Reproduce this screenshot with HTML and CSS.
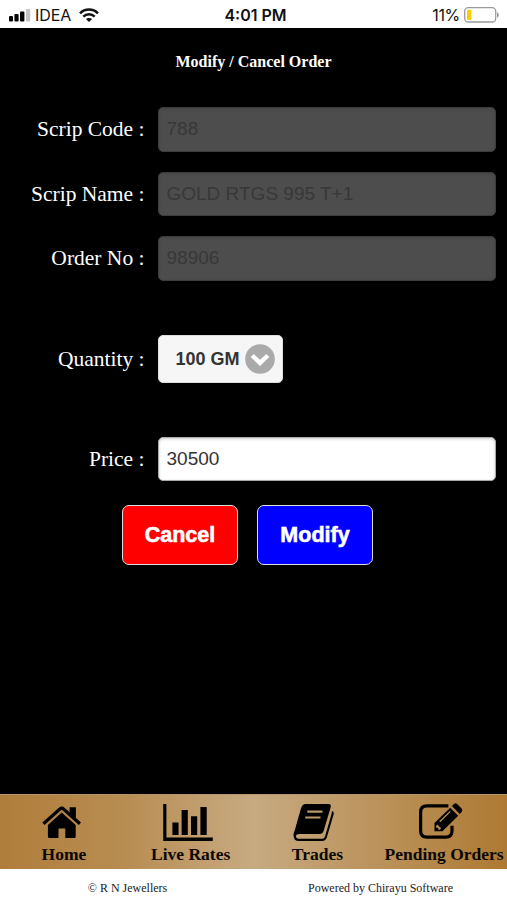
FILE: index.html
```html
<!DOCTYPE html>
<html lang="en">
<head>
<meta charset="utf-8">
<title>Modify / Cancel Order</title>
<link rel="stylesheet" href="styles.css">
</head>
<body>
<div class="screen">
  <header class="status">
    <div class="status-left">
      <svg class="signal" width="22" height="13" viewBox="0 0 22 13">
        <rect x="0" y="7" width="4" height="5.5" rx="1"/>
        <rect x="5.4" y="5" width="4.2" height="7.5" rx="1"/>
        <rect x="11" y="2.6" width="4.4" height="9.9" rx="1"/>
        <rect x="17" y="0" width="4.2" height="12.5" rx="1" fill="#c4c4c4"/>
      </svg>
      <span class="carrier">IDEA</span>
      <svg class="wifi" width="20" height="15" viewBox="0 0 20 15" fill="none" stroke="#111" stroke-width="2.5">
        <path d="M1 5.3C6 .3 14 .3 19 5.3"/>
        <path d="M4.3 8.6c3.3-3.1 8.1-3.1 11.4 0"/>
        <path d="M10 14 6.9 11.1c1.8-1.5 4.4-1.5 6.2 0z" fill="#111" stroke="none"/>
      </svg>
    </div>
    <div class="time">4:01 PM</div>
    <div class="status-right">
      <span class="percent">11%</span>
      <svg width="36" height="16" viewBox="0 0 36 16">
        <rect x=".7" y=".7" width="31" height="14.3" rx="3.5" fill="#fff" stroke="#9b9b9b" stroke-width="1.3"/>
        <rect x="3" y="2.8" width="4.4" height="10.2" rx="1" fill="#fc0"/>
        <path d="M33 5.2c2.4 1 2.4 4.4 0 5.4z" fill="#9b9b9b"/>
      </svg>
    </div>
  </header>

  <main class="content">
    <h1 class="title">Modify / Cancel Order</h1>
    <form class="form">
      <label class="label" for="code">Scrip Code :</label>
      <input class="field" id="code" value="788" disabled>
      <label class="label" for="name">Scrip Name :</label>
      <input class="field" id="name" value="GOLD RTGS 995 T+1" disabled>
      <label class="label" for="order">Order No :</label>
      <input class="field" id="order" value="98906" disabled>
      <span class="label">Quantity :</span>
      <div class="select">
        <span class="select-text">100 GM</span>
        <svg width="30" height="30" viewBox="0 0 30 30">
          <circle cx="15" cy="15" r="14.8" fill="#aaa"/>
          <path d="M7.2 11.5 15 18.9l7.8-7.4" fill="none" stroke="#fff" stroke-width="4.4"/>
        </svg>
      </div>
      <label class="label" for="price">Price :</label>
      <input class="field" id="price" value="30500">
    </form>
    <div class="actions">
      <button class="btn cancel" type="button">Cancel</button>
      <button class="btn modify" type="button">Modify</button>
    </div>
  </main>

  <nav class="nav">
    <a class="nav-item">
      <svg class="nav-icon" viewBox="36.9 800 54 42">
        <path d="M43.3 823.8 59.5 809.2Q61.6 807.3 63.7 809.2L79.8 823.8" fill="none" stroke="#000" stroke-width="3.2"/>
        <path d="M69.5 807.2h6.3v13l-6.3-5.8zM61.6 812.6 75.6 825v11.4q0 1.6-1.6 1.6h-8.8v-9.4h-6.8v9.4h-9q-1.6 0-1.6-1.6V825z"/>
      </svg>
      <span>Home</span>
    </a>
    <a class="nav-item">
      <svg class="nav-icon" viewBox="163.6 800 54 42">
        <path d="M162.8 804h3.2v33.6h46.4v3.4h-49.6zM172 822.5h6.2V835H172zM181.2 810h6.2v25h-6.2zM190.6 816.3h6.2V835h-6.2zM200 807h6.3v28H200z"/>
      </svg>
      <span>Live Rates</span>
    </a>
    <a class="nav-item">
      <svg class="nav-icon" viewBox="290.4 800 54 42">
        <path d="M305.5 804h23.3q3.2 0 2.3 3.2L324 831q-1 3-4 3h-20q-3.5 0-3.6 2.2 0 2.5 3.1 2.5h23q2.2 0 3-2.5l6.5-22.5q.4-1.6.3-2.8 2.5.9 1.7 3.7l-6.8 22.9q-1.2 3.5-4.8 3.5h-23.2q-5 0-5.3-5.5 0-2.5 1.3-5.2l5.7-20.3q1.5-6 4.6-6z"/>
        <path d="M307.7 811.6h15.2M305.6 817.5h15.3" stroke="#b99867" stroke-width="2.2"/>
      </svg>
      <span>Trades</span>
    </a>
    <a class="nav-item">
      <svg class="nav-icon" viewBox="417.1 800 54 42">
        <path d="M448.5 805.8H427q-6.3 0-6.3 6.3v18.7q0 6.3 6.3 6.3h18.8q6.3 0 6.3-6.3v-5" fill="none" stroke="#000" stroke-width="3.2"/>
        <path d="m434.6 823 15.7-15.3 8 8-15.8 15.5h-7.9z"/>
        <path d="m452 806 1.8-1.8q1.8-1.7 3.6 0l4.3 4.4q1.6 1.8 0 3.5l-1.8 1.8z"/>
        <path d="m439.8 821.8 10.6-10.4" stroke="#c19760" stroke-width="1.2"/>
        <path d="m437.2 824.6 4 4-1.3 1.2h-1.5v-2h-2.2v-1.7z" fill="#bd935b"/>
      </svg>
      <span>Pending Orders</span>
    </a>
  </nav>
  <footer class="footer">
    <span>© R N Jewellers</span>
    <span>Powered by Chirayu Software</span>
  </footer>
</div>
</body>
</html>
```
FILE: styles.css
```css
* { box-sizing: border-box; }
body { margin: 0; background: #fff; }
.screen {
  width: 507px;
  height: 900px;
  display: flex;
  flex-direction: column;
  overflow: hidden;
  font-family: "Liberation Serif", serif;
}
.status {
  height: 28px;
  padding: 2px 7px 0 9px;
  display: grid;
  grid-template-columns: 1fr auto 1fr;
  align-items: center;
  background: #fff;
  color: #111;
  font: 16px/24px Inter, "Liberation Sans", sans-serif;
}
.status-left { display: flex; align-items: center; }
.carrier { margin: 0 8px 0 4px; letter-spacing: -.1px; }
.time { padding-left: 2px; font-weight: 600; font-size: 16px; }
.status-right { display: flex; align-items: center; justify-content: flex-end; gap: 4px; }
.percent { font-size: 16px; letter-spacing: -.3px; }
.content { height: 766px; background: #000; color: #fff; }
.title {
  margin: 0;
  padding-top: 24px;
  height: 79px;
  text-align: center;
  font-size: 16px;
  line-height: 20px;
}
.form {
  display: grid;
  grid-template-columns: 144.5px 338px;
  column-gap: 13px;
  grid-template-rows: 44.5px 44.5px 44.5px 116px 44.5px;
  row-gap: 20px;
}
.label {
  align-self: center;
  text-align: right;
  font-size: 21.5px;
  line-height: 26px;
  white-space: nowrap;
}
.field {
  width: 100%;
  height: 44.5px;
  padding: 0 8px;
  border: 1px solid #aaa;
  border-radius: 5px;
  background: #fff;
  box-shadow: inset 0 1px 3px rgba(0, 0, 0, .2);
  color: #333;
  font: 19px "Liberation Sans", sans-serif;
}
.field:disabled {
  background: #4d4d4d;
  border-color: #3c3c3c;
  box-shadow: inset 0 1px 3px rgba(0, 0, 0, .12);
  color: #383838;
}
.select {
  align-self: center;
  width: 125px;
  height: 48px;
  padding: 0 7px 0 17px;
  display: flex;
  align-items: center;
  justify-content: space-between;
  border: 1px solid #ddd;
  border-radius: 5px;
  background: #f6f6f6;
  color: #333;
  font: bold 18px "Liberation Sans", sans-serif;
}
.select-text { padding-top: 2px; }
.actions {
  margin: 23.5px 134px 0 122px;
  display: flex;
  justify-content: space-between;
}
.btn {
  width: 116px;
  height: 60px;
  padding-top: 3px;
  border: 1.5px solid #ddd;
  border-radius: 7px;
  color: #fff;
  font: bold 21.5px "Liberation Sans", sans-serif;
  -webkit-text-stroke: .6px #fff;
}
.cancel { background: #f00; }
.modify { background: #00f; }
.nav {
  height: 75px;
  display: grid;
  grid-template-columns: repeat(4, 1fr);
  border-top: 1px solid #b59669;
  background: linear-gradient(90deg, #b07d3b 0, #b88d52 25%, #c7aa82 50%, #b88d52 80%, #ae7933 100%);
}
.nav-item {
  display: flex;
  flex-direction: column;
  align-items: center;
  padding: 5px 0 0 1px;
  color: #0b0703;
  font-size: 17.5px;
  font-weight: bold;
  line-height: 24px;
  white-space: nowrap;
}
.nav-icon { width: 54px; height: 42px; flex: none; overflow: visible; }
.footer {
  height: 31px;
  display: grid;
  grid-template-columns: 1fr 1fr;
  align-items: center;
  padding: 7px 0 0 1px;
  background: #fff;
  color: #222;
  text-align: center;
  font-size: 12px;
}
```
